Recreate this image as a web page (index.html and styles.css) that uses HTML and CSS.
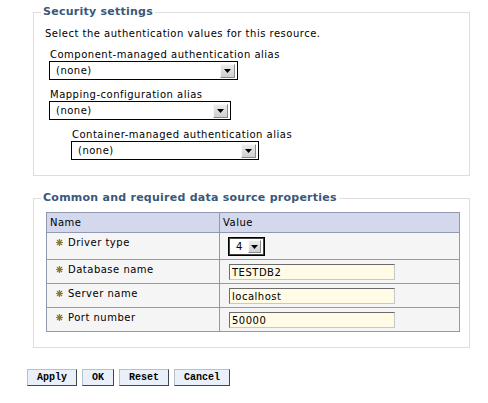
FILE: index.html
```html
<!DOCTYPE html>
<html>
<head>
<meta charset="utf-8">
<title>Data source</title>
<link rel="stylesheet" href="styles.css">
</head>
<body>
<div class="page">
  <fieldset class="group group-security">
    <legend class="group-title">Security settings</legend>
    <p class="intro">Select the authentication values for this resource.</p>
    <div class="field">
      <div class="field-label">Component-managed authentication alias</div>
      <div class="select select-w1"><span class="select-text">(none)</span><span class="select-arrow"><svg width="7" height="4" viewBox="0 0 7 4"><path d="M0 0h7L3.5 4z" fill="#000"/></svg></span></div>
    </div>
    <div class="field">
      <div class="field-label">Mapping-configuration alias</div>
      <div class="select select-w2"><span class="select-text">(none)</span><span class="select-arrow"><svg width="7" height="4" viewBox="0 0 7 4"><path d="M0 0h7L3.5 4z" fill="#000"/></svg></span></div>
    </div>
    <div class="field field-indent">
      <div class="field-label">Container-managed authentication alias</div>
      <div class="select select-w3"><span class="select-text">(none)</span><span class="select-arrow"><svg width="7" height="4" viewBox="0 0 7 4"><path d="M0 0h7L3.5 4z" fill="#000"/></svg></span></div>
    </div>
  </fieldset>

  <fieldset class="group group-props">
    <legend class="group-title">Common and required data source properties</legend>
    <table class="props">
      <thead>
        <tr><th class="col-name">Name</th><th>Value</th></tr>
      </thead>
      <tbody>
        <tr>
          <td><span class="req"><svg width="7" height="7" viewBox="0 0 7 7"><path d="M3.5 0v7M0 3.5h7M1 1l5 5M6 1L1 6" stroke="#8a7a30" stroke-width="1.2"/></svg></span>Driver type</td>
          <td><div class="select select-small"><span class="select-text">4</span><span class="select-arrow"><svg width="7" height="4" viewBox="0 0 7 4"><path d="M0 0h7L3.5 4z" fill="#000"/></svg></span></div></td>
        </tr>
        <tr>
          <td><span class="req"><svg width="7" height="7" viewBox="0 0 7 7"><path d="M3.5 0v7M0 3.5h7M1 1l5 5M6 1L1 6" stroke="#8a7a30" stroke-width="1.2"/></svg></span>Database name</td>
          <td><input class="text-input" type="text" value="TESTDB2"></td>
        </tr>
        <tr>
          <td><span class="req"><svg width="7" height="7" viewBox="0 0 7 7"><path d="M3.5 0v7M0 3.5h7M1 1l5 5M6 1L1 6" stroke="#8a7a30" stroke-width="1.2"/></svg></span>Server name</td>
          <td><input class="text-input" type="text" value="localhost"></td>
        </tr>
        <tr>
          <td><span class="req"><svg width="7" height="7" viewBox="0 0 7 7"><path d="M3.5 0v7M0 3.5h7M1 1l5 5M6 1L1 6" stroke="#8a7a30" stroke-width="1.2"/></svg></span>Port number</td>
          <td><input class="text-input" type="text" value="50000"></td>
        </tr>
      </tbody>
    </table>
  </fieldset>

  <div class="actions">
    <button class="btn" type="button">Apply</button>
    <button class="btn" type="button">OK</button>
    <button class="btn" type="button">Reset</button>
    <button class="btn" type="button">Cancel</button>
  </div>
</div>
</body>
</html>
```

FILE: styles.css
```css
html, body {
  margin: 0;
  background: #fff;
}
body {
  font-family: "DejaVu Sans", Verdana, sans-serif;
  font-size: 10px;
  line-height: 12px;
  letter-spacing: 0.5px;
  color: #000;
}
.page {
  padding-top: 5px;
}
.group {
  margin: 0 0 0 33px;
  width: 437px;
  box-sizing: border-box;
  border: 1px solid #dedede;
  padding: 0;
  min-width: 0;
}
.group-title {
  margin-left: 7px;
  padding: 0 2px;
  font-size: 11px;
  font-weight: bold;
  line-height: 14px;
  letter-spacing: 0.25px;
  color: #3a5878;
}
.group-security {
  padding: 9px 0 15px 0;
}
.intro {
  margin: 0 0 0 11px;
}
.field {
  margin-top: 9px;
  padding-left: 15px;
}
.field-indent {
  padding-left: 37px;
}
.field-label {
  padding-left: 1px;
}
.select {
  display: flex;
  align-items: center;
  box-sizing: border-box;
  height: 19px;
  border: 1px solid #000;
  background: #fff;
}
.select-w1 { width: 189px; }
.select-w2 { width: 182px; }
.select-w3 { width: 188px; }
.select-text {
  padding-left: 6px;
}
.select-arrow {
  margin-left: auto;
  margin-right: 2px;
  box-sizing: border-box;
  width: 15px;
  height: 14px;
  display: flex;
  align-items: center;
  justify-content: center;
  background: linear-gradient(#ececec, #cfcfcf);
  border: 1px solid;
  border-color: #f8f8f8 #8a8a8a #8a8a8a #f8f8f8;
}
.group-props {
  margin-top: 15px;
  padding: 0 0 15px 0;
}
.props {
  width: 414px;
  margin: 7px 0 0 12px;
  border-collapse: collapse;
  border: 1px solid #9298b0;
}
.props th {
  background: #d4d8ec;
  font-weight: normal;
  text-align: left;
  padding: 4px 3px 3px;
  height: 12px;
  border: 1px solid #9298b0;
}
.props th.col-name {
  width: 166px;
}
.props td {
  background: #f5f5f5;
  vertical-align: top;
  padding: 4px 3px 3px 4px;
  border: 1px solid #9298b0;
}
.req {
  display: inline-block;
  width: 7px;
  height: 7px;
  margin: 0 5px 0 5px;
  vertical-align: 0;
}
.req svg {
  display: block;
}
.select-small {
  width: 37px;
  height: 19px;
  margin-left: 4px;
  box-shadow: inset 0 0 0 1px #444;
}
.select-small .select-text {
  padding-left: 7px;
}
.select-small .select-arrow {
  margin-right: 3px;
  width: 13px;
  height: 13px;
}
.text-input {
  display: block;
  box-sizing: border-box;
  width: 166px;
  height: 16px;
  margin: 0 0 0 5px;
  padding: 0 2px;
  border: 1px solid;
  border-color: #6c6c6c #c8c8c8 #c8c8c8 #6c6c6c;
  background: #fffbe6;
  font-family: "DejaVu Sans", Verdana, sans-serif;
  font-size: 10px;
  letter-spacing: 0.5px;
  color: #000;
}
.actions {
  display: flex;
  gap: 5px;
  margin-top: 21px;
  padding-left: 27px;
}
.btn {
  box-sizing: border-box;
  height: 17px;
  padding: 0 9px;
  font-family: "Liberation Mono", "Courier New", monospace;
  font-size: 10px;
  font-weight: bold;
  line-height: 14px;
  letter-spacing: 0;
  color: #000;
  background: #eaf0fa;
  border: 1px solid;
  border-color: #b8c0cc #3e4650 #3e4650 #b8c0cc;
}
```
